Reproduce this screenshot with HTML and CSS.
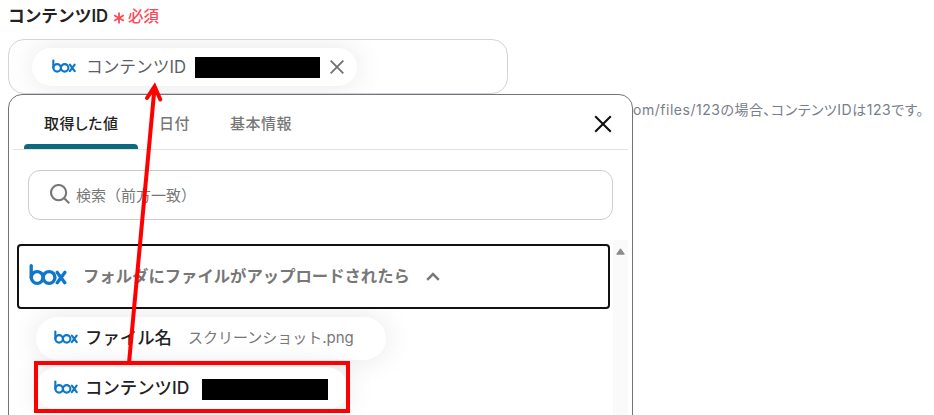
FILE: index.html
```
<!DOCTYPE html>
<html lang="ja">
<head>
<meta charset="UTF-8">
<meta name="viewport" content="width=device-width, initial-scale=1.0">
<title>コンテンツID</title>
<link rel="stylesheet" href="styles.css">
</head>
<body>
<svg class="defs" width="0" height="0">
  <symbol id="box-logo" viewBox="0 0 36 20">
    <g fill="none" stroke="#0e77c9" stroke-width="3.2" stroke-linecap="round">
      <path d="M2 1.7V12.8"/>
      <circle cx="7.7" cy="12.8" r="5.6"/>
      <circle cx="19" cy="12.8" r="5.6"/>
      <path d="M26.8 8L34 17.8M34 8L26.8 17.8"/>
    </g>
  </symbol>
</svg>

<div class="field-label">
  <span class="label-text">コンテンツID</span>
  <svg class="asterisk" width="12" height="12" viewBox="0 0 12 12"><path d="M6 0.5V11.5M1.2 3.2L10.8 8.8M10.8 3.2L1.2 8.8"/></svg>
  <span class="required">必須</span>
</div>

<div class="field">
  <div class="chip selected">
    <svg class="logo-small" width="24" height="14"><use href="#box-logo"/></svg>
    <span class="chip-name">コンテンツID</span>
    <span class="mask"></span>
    <svg class="remove" width="14" height="14" viewBox="0 0 14 14"><path d="M0.7 0.7L13.3 13.3M13.3 0.7L0.7 13.3"/></svg>
  </div>
</div>

<div class="below">
  <div class="popup">
    <div class="tabs">
      <div class="tab active">取得した値</div>
      <div class="tab date">日付</div>
      <div class="tab basic">基本情報</div>
      <svg class="close" width="18" height="18" viewBox="0 0 18 18"><path d="M1.2 1.2L16.8 16.8M16.8 1.2L1.2 16.8"/></svg>
    </div>
    <div class="search">
      <svg width="20" height="20" viewBox="0 0 20 20"><circle cx="8.6" cy="8.6" r="7.6"/><path d="M14 14L19.2 19.2"/></svg>
      <span>検索（前方一致）</span>
    </div>
    <div class="list">
      <div class="items">
        <div class="group">
          <svg class="logo" width="38" height="21"><use href="#box-logo"/></svg>
          <span class="group-name">フォルダにファイルがアップロードされたら</span>
          <svg class="chevron" width="14" height="9" viewBox="0 0 14 9"><path d="M1.2 7.8L7 2L12.8 7.8"/></svg>
        </div>
        <div class="chip item">
          <svg class="logo-small" width="24" height="14"><use href="#box-logo"/></svg>
          <span class="chip-name file-name">ファイル名</span>
          <span class="sample">スクリーンショット.png</span>
        </div>
        <div class="chip item second">
          <svg class="logo-small" width="24" height="14"><use href="#box-logo"/></svg>
          <span class="chip-name">コンテンツID</span>
          <span class="mask"></span>
        </div>
      </div>
      <div class="scrollbar">
        <svg width="9" height="7" viewBox="0 0 9 7"><path d="M4.5 0.8L8.3 6.2H0.7Z"/></svg>
      </div>
    </div>
  </div>
  <div class="hint">om/files/123の場合、コンテンツIDは123です。</div>
</div>

<!-- red frame and arrow over the page -->
<svg class="callout" width="934" height="415" viewBox="0 0 934 415">
  <rect x="36" y="363" width="312" height="48"/>
  <path d="M129 363L154.5 88"/>
  <path d="M147 98L154.6 86.5L160.3 99.5" stroke-linecap="round"/>
</svg>
</body>
</html>
```
FILE: styles.css
```
* {
  box-sizing: border-box;
}

body {
  margin: 0;
  padding: 0 8px;
  height: 415px;
  overflow: hidden;
  position: relative;
  background: #fff;
  color: #222;
  font-family: Inter, "Noto Sans CJK JP", sans-serif;
  font-size: 16.7px;
  white-space: nowrap;
}

svg {
  display: block;
  flex-shrink: 0;
}

.defs {
  position: absolute;
}

.field-label {
  height: 39px;
  display: flex;
  align-items: center;
  padding-bottom: 9px;
}

.label-text {
  width: 105px;
  font-weight: 600;
}

.asterisk {
  margin-top: 6px;
  fill: none;
  stroke: #ff4757;
  stroke-width: 1.8;
}

.required {
  margin-left: 3px;
  color: #ff4757;
  font-size: 15.5px;
  font-weight: 500;
}

.field {
  width: 500px;
  height: 55px;
  border: 1px solid #d0d4dc;
  border-radius: 16px;
  padding: 8px 23px;
  overflow: hidden;
}

.chip {
  display: flex;
  align-items: center;
  background: #fff;
  border-radius: 22px;
  box-shadow: 0 0 30px rgba(0, 0, 0, 0.1);
}

.selected {
  width: 325px;
  height: 38px;
  padding-left: 20px;
  color: #5c6066;
}

.logo-small {
  margin-bottom: 3px;
}

.chip-name {
  width: 109px;
  margin-left: 10px;
  padding-bottom: 3px;
}

.mask {
  width: 125px;
  height: 21px;
  background: #000;
}

.remove {
  margin-left: 10px;
  fill: none;
  stroke: #707070;
  stroke-width: 1.8;
}

.below {
  display: flex;
}

.popup {
  width: 625px;
  height: 340px;
  border: 1px solid #747474;
  border-radius: 14px;
  background: #fff;
  box-shadow: 0 0 3px rgba(0, 0, 0, 0.03);
}

.tabs {
  display: flex;
  height: 55px;
  margin: 0 4px;
  padding-left: 11px;
  border-bottom: 1px solid #e3e3e3;
}

.tab {
  height: 54px;
  padding-top: 18px;
  color: #777;
  font-size: 15px;
  font-weight: 500;
  line-height: 22px;
  letter-spacing: 0.5px;
  font-feature-settings: "palt";
}

.active {
  width: 114px;
  padding-left: 20px;
  color: #222;
  position: relative;
}

.active::after {
  content: "";
  position: absolute;
  left: 0;
  bottom: 0;
  width: 114px;
  height: 5px;
  border-radius: 4px 4px 0 0;
  background: #0b6a80;
}

.date {
  width: 71px;
  margin-left: 21px;
}

.close {
  margin: 20px 16px 0 auto;
  fill: none;
  stroke: #111;
  stroke-width: 2.1;
}

.search {
  display: flex;
  align-items: center;
  width: 585px;
  height: 50px;
  margin: 20px 0 0 19px;
  padding-left: 21px;
  border: 1px solid #ccc;
  border-radius: 12px;
  color: #777;
  font-size: 15px;
}

.search svg {
  margin-right: 6px;
  margin-bottom: 3px;
  fill: none;
  stroke: #777;
  stroke-width: 2.1;
}

.search span {
  padding-bottom: 1px;
}

.list {
  display: flex;
  height: 180px;
  margin-top: 20px;
  overflow: hidden;
}

.items {
  width: 604px;
  padding: 4px 0 0 8px;
}

.group {
  display: flex;
  align-items: center;
  width: 593px;
  height: 65px;
  padding-left: 10px;
  border: 2px solid #111;
  border-radius: 4px;
  background: #fff;
  position: relative;
  z-index: 1;
}

.logo {
  margin-bottom: 4px;
}

.group-name {
  width: 343px;
  margin-left: 16px;
  padding-bottom: 3px;
  color: #777;
  font-size: 16.35px;
  font-weight: 600;
}

.chevron {
  fill: none;
  stroke: #777;
  stroke-width: 2.5;
}

.item {
  width: 350px;
  height: 43px;
  margin: 8px 0 0 19px;
  padding-left: 18px;
}

.item .chip-name {
  margin-left: 7px;
  padding-bottom: 5px;
  width: 117px;
  font-size: 17.4px;
  font-weight: 500;
}

.item .file-name {
  width: 103px;
}

.sample {
  padding-bottom: 4px;
  color: #777;
  font-size: 15px;
}

.second {
  width: 312px;
  margin-top: 7px;
}

.second .mask {
  width: 126px;
  margin-top: 2px;
}

.scrollbar {
  width: 15px;
  padding: 8px 0 0 3px;
  background: #fafafa;
}

.scrollbar svg {
  fill: #8c8c8c;
  stroke: #8c8c8c;
  stroke-linejoin: round;
}

.hint {
  margin-top: 5px;
  color: #77808a;
  font-size: 14px;
  line-height: 22px;
  letter-spacing: 0.52px;
  font-feature-settings: "palt";
}

.callout {
  position: absolute;
  z-index: 2;
  left: 0;
  top: 0;
  fill: none;
  stroke: #f00;
  stroke-width: 4;
}
```
